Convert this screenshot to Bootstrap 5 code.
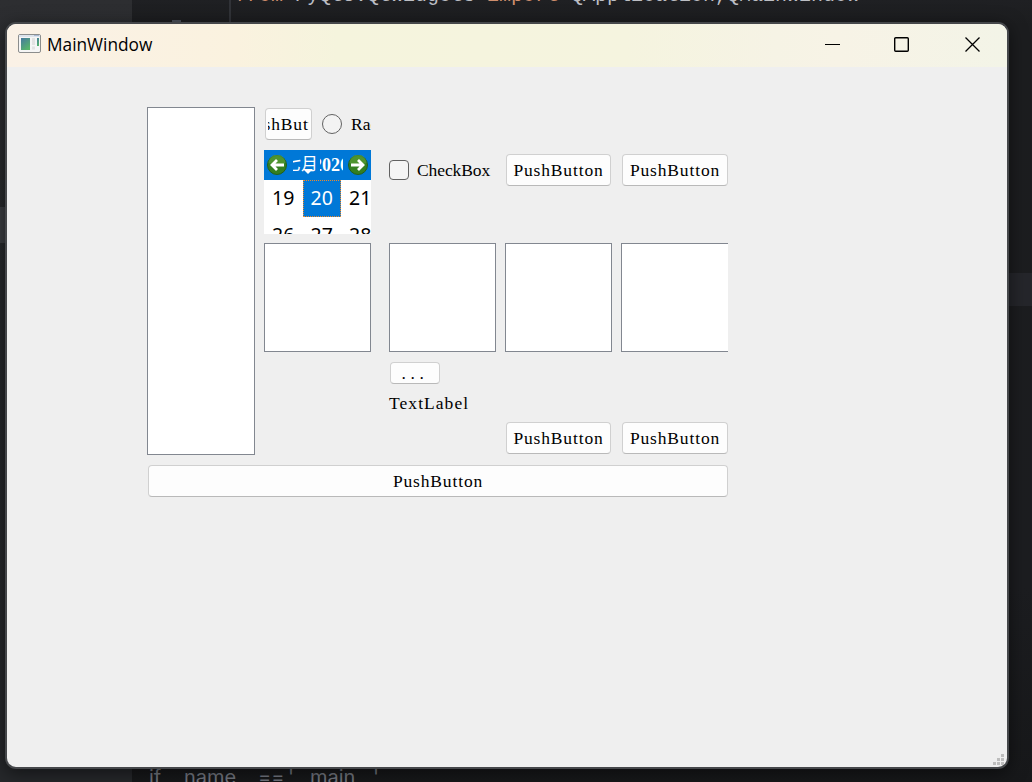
<!DOCTYPE html>
<html lang="en">
<head>
<meta charset="utf-8">
<meta name="viewport" content="width=device-width, initial-scale=1">
<title>MainWindow</title>
<link href="https://cdn.jsdelivr.net/npm/bootstrap@5.3.0/dist/css/bootstrap.min.css" rel="stylesheet">
<style>
body{width:1032px;height:782px;background:#1e1f22;line-height:1}
.editor-side{width:132px;background:linear-gradient(#2d2e31,#27292c 35%,#26282b)}
.side-active{margin-top:207px;height:36px;background:#3c3e42}
.editor-code{background:linear-gradient(#1f2023,#1c1d1f 24px,#1c1d20 75%,#17181a)}
.code-top{display:flow-root;height:24px;margin-left:97px;border-left:2px solid #313338;font:20px/24px "Liberation Mono",monospace;color:#bcbec4}
.code-top div{margin:-16px 0 0 4px}
.kw{color:#cf8e6d}
.line-no{left:172px;top:20px;width:9px;height:4px;border:2px solid #4b5059}
.line-active{height:33px;margin-top:249px;background:#25262b}
.code-bottom{position:absolute;left:149px;top:765px;font:20px/24px Inter,sans-serif;color:#757982}
.code-bottom span{display:inline-block}
.app-window{left:5px;top:22px;width:1004px;height:747px;border:2px solid #45474a;border-radius:11px;background:#efefef;box-shadow:0 4px 18px #0008}
.titlebar{height:43px;padding:0 25px 0 11px;background:linear-gradient(90deg,#faf1e6,#faf2df 23%,#f5f4dd 33%,#f5f4df 62%,#f6f3e5 77%,#f7f3e6 83%,#f3f4e7)}
.title-text{font:17.3px/24px "Open Sans",sans-serif;color:#000;margin:-2px 0 0 6px}
.form-area{width:581px;margin:40px 0 0 140px;font:17.5px/20px "Liberation Serif",serif;letter-spacing:.85px;color:#000}
.list-pane{background:#fff;border:1px solid #828790}
.col-a{width:108px;height:348px;margin-right:9px}
.col-b{width:107px;margin-right:18px}
.sq{width:107px;height:109px}
.g3{display:grid;grid-template-columns:107px 107px 107px;column-gap:9px;grid-template-rows:127px 110px 22px 20px 32px;height:348px;row-gap:9px}
.mid-row{padding-bottom:2px}
.qbtn{display:flex;align-items:center;justify-content:center;height:32px;border:1px solid #d0d0d0;border-bottom-color:#b9b9b9;border-radius:4px;background:#fdfdfd;color:#000;overflow:hidden;white-space:nowrap;padding:0}
.w105{width:105px;margin-left:1px}.w106{width:106px;margin-left:1px}
.radio{width:20px;height:20px;border:1px solid #626262;border-radius:50%;background:#f3f3f3}
.check{width:20px;height:20px;border:1px solid #626262;border-radius:4px;background:#f5f5f5}
.check-text{letter-spacing:-.1px}
.label-text{letter-spacing:1.05px}
.dots{width:50px;height:22px;margin-left:1px;padding-right:0;letter-spacing:4.6px}
.cal{width:107px;height:84px;background:#fff;letter-spacing:0;overflow:hidden}
.cal-head{height:30px;background:#0078d7;color:#fff}
.clip-month{width:23px;height:20px;font:17px/20px "Liberation Serif","Noto Sans CJK SC",serif}
.clip-year{width:23px;height:20px;font:bold 18px/20px "Liberation Serif",serif}
.days{font:19.5px/35px "Noto Sans",sans-serif}
.days div{width:38.5px;flex:none;text-align:center;height:37px}
.days .today{background:#0078d7;color:#fff;outline:1px dotted #f08a28;outline-offset:-1px}
</style>
<script src="https://cdn.jsdelivr.net/npm/bootstrap@5.3.0/dist/js/bootstrap.bundle.min.js"></script>
</head>
<body class="position-relative overflow-hidden d-flex">
<div class="editor-side h-100 flex-shrink-0 overflow-hidden"><div class="side-active"></div></div>
<div class="editor-code h-100 flex-fill overflow-hidden">
  <div class="code-top text-nowrap"><div><span class="kw">from</span> PyQt5.QtWidgets <span class="kw">import</span> QApplication,QMainWindow</div></div>
  <div class="line-active"></div>
</div>
<div class="line-no position-absolute border-bottom-0"></div>
<div class="code-bottom text-nowrap"><span style="width:15px">if</span><span style="width:20px">__</span><span style="width:53px">name</span><span style="width:21px">__</span><span style="width:30px">==</span><span style="width:22px">'__</span><span style="width:63px">main__</span><span>'</span></div>

<main class="app-window position-absolute overflow-hidden">
  <header class="titlebar d-flex align-items-center">
    <svg width="23" height="19" viewBox="0 0 23 19" style="margin-top:-4px"><rect x=".5" y=".5" width="22" height="18" rx="1.5" fill="#f5f5f5" stroke="#8b8d8d"/><path d="M1 2h21" stroke="#dce3ec" stroke-width="2"/><path d="M16 1.5h5" stroke="#a9b9d4"/><defs><linearGradient id="ic" x2=".6" y2="1"><stop stop-color="#4678a0"/><stop offset="1" stop-color="#57b46b"/></linearGradient></defs><rect x="3" y="4" width="9" height="12" fill="url(#ic)"/><path d="M14 4h3v7h-3zM14 12.500h3v3h-3z" fill="#e2e2e2"/><rect x="19" y="4" width="2" height="8" fill="url(#ic)"/></svg>
    <span class="title-text">MainWindow</span>
    <svg class="ms-auto" width="157" height="17" viewBox="0 0 157 17" style="margin-top:-2px" fill="none" stroke="#000"><path d="M0 8.500h15" /><rect x="69.700" y="1.700" width="13.600" height="13.600" rx="1" stroke-width="1.400"/><path d="m140.500 1.500 14 14m0-14-14 14" stroke-width="1.300"/></svg>
  </header>
  <section class="form-area">
    <div class="d-flex">
      <div class="list-pane col-a"></div>
      <div class="col-b">
        <div class="d-flex align-items-center overflow-hidden" style="height:34px">
          <div class="qbtn flex-shrink-0" style="width:47px;margin-left:1px"><div class="overflow-hidden d-flex justify-content-center" style="width:41px"><span>PushButton</span></div></div>
          <span class="radio flex-shrink-0" style="margin:0 9px 0 10px"></span><span style="letter-spacing:0">RadioButton</span>
        </div>
        <div class="cal" style="margin-top:9px">
          <div class="cal-head d-flex align-items-center position-relative">
            <svg width="20" height="20" viewBox="0 0 20 20" style="margin-left:3px"><circle cx="10" cy="10" r="9.500" fill="#347f20" stroke="#235f1a"/><path d="M1.500 8a8.500 8.500 0 0 1 17 0Q10 11 1.500 8" fill="#65a53c" opacity=".55"/><path d="M17 10H5m5-5-5 5 5 5" fill="none" stroke="#fff" stroke-width="2.800"/></svg>
            <div class="clip-month overflow-hidden d-flex text-nowrap" style="margin-left:6px"><span style="margin-left:-9px">七月</span></div>
            <div class="clip-year overflow-hidden d-flex" style="margin-left:4px"><span style="margin-left:-7px">2026</span></div>
            <svg width="20" height="20" viewBox="0 0 20 20" style="margin-left:5px"><circle cx="10" cy="10" r="9.500" fill="#347f20" stroke="#235f1a"/><path d="M1.500 8a8.500 8.500 0 0 1 17 0Q10 11 1.500 8" fill="#65a53c" opacity=".55"/><path d="M3 10h12m-5-5 5 5-5 5" fill="none" stroke="#fff" stroke-width="2.800"/></svg>
            <svg class="position-absolute" width="10" height="5" viewBox="0 0 10 5" style="left:39px;top:19px"><path d="M0 0h10L5 5z" fill="#fff"/></svg>
          </div>
          <div class="days d-flex"><div>19</div><div class="today">20</div><div>21</div></div>
          <div class="days d-flex"><div>26</div><div>27</div><div>28</div></div>
        </div>
        <div class="list-pane sq" style="margin-top:9px"></div>
      </div>
      <div class="g3">
        <div class="mid-row d-flex align-items-center"><span class="check flex-shrink-0" style="margin-right:8px"></span><span class="check-text">CheckBox</span></div>
        <div class="mid-row d-flex align-items-center"><div class="qbtn w105">PushButton</div></div>
        <div class="mid-row d-flex align-items-center"><div class="qbtn w106 flex-shrink-0">PushButton</div></div>
        <div class="list-pane sq"></div><div class="list-pane sq"></div><div class="list-pane sq border-end-0"></div>
        <div class="qbtn dots">...</div><div></div><div></div>
        <div class="label-text">TextLabel</div><div></div><div></div>
        <div></div><div class="qbtn w105">PushButton</div><div class="qbtn w106">PushButton</div>
      </div>
    </div>
    <div class="qbtn" style="margin:10px 0 0 1px">PushButton</div>
  </section>
  <svg class="position-absolute" width="11" height="11" viewBox="0 0 11 11" style="right:3px;bottom:2px" fill="#bdbdbd"><path d="M8 0h3v3H8zM4 4h3v3H4zM8 4h3v3H8zM0 8h3v3H0zM4 8h3v3H4zM8 8h3v3H8z"/></svg>
</main>
</body>
</html>
